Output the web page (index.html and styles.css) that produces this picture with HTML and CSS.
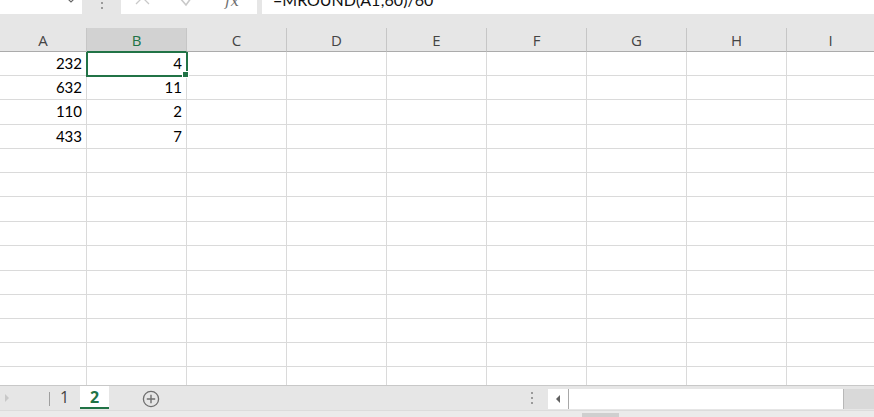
FILE: index.html
```html
<!DOCTYPE html>
<html>
<head>
<meta charset="utf-8">
<link rel="stylesheet" href="styles.css">
</head>
<body>
<div class="app">
  <div class="topbar">
    <div class="namebox">
      <svg class="chev" width="8" height="4" viewBox="0 0 8 4"><path d="M1 -1 L4 2 L7 -1" fill="none" stroke="#666" stroke-width="1.2"/></svg>
    </div>
    <div class="grip"><span class="dot"></span><span class="dot"></span></div>
    <div class="iconbox">
      <svg class="ico-x" width="16" height="14" viewBox="0 0 16 14"><path d="M1 -9 L14 4 M14 -9 L1 4" stroke="#c9c9c9" stroke-width="1.3" fill="none"/></svg>
      <svg class="ico-check" width="16" height="14" viewBox="0 0 16 14"><path d="M1 -2 L7 5 L15 -6" stroke="#c9c9c9" stroke-width="1.6" fill="none"/></svg>
      <span class="fx">fx</span>
    </div>
    <div class="formula"><span class="ftext">=MROUND(A1;60)/60</span></div>
  </div>

  <div class="sheet">
    <div class="hdr">A</div>
    <div class="hdr sel">B</div>
    <div class="hdr">C</div>
    <div class="hdr">D</div>
    <div class="hdr">E</div>
    <div class="hdr">F</div>
    <div class="hdr">G</div>
    <div class="hdr">H</div>
    <div class="hdr last">I</div>
  </div>
  <div class="cells" id="cells"></div>

  <div class="tabbar">
    <div class="nav"><svg width="6" height="10" viewBox="0 0 6 10"><path d="M1 1 L5 5 L1 9 Z" fill="#c8c8c8"/></svg></div>
    <div class="tabsep"></div>
    <div class="tab">1</div>
    <div class="tab active">2</div>
    <div class="add"><svg width="18" height="18" viewBox="0 0 18 18"><circle cx="9" cy="9" r="7.6" fill="none" stroke="#6f6f6f" stroke-width="1.3"/><path d="M9 4.8 V13.2 M4.8 9 H13.2" stroke="#6f6f6f" stroke-width="1.4"/></svg></div>
    <div class="spacer"></div>
    <div class="vdots"><span class="dot"></span><span class="dot"></span><span class="dot"></span></div>
    <div class="hscroll">
      <div class="sbtn"><svg width="6" height="10" viewBox="0 0 6 10"><path d="M5 1 L1 5 L5 9 Z" fill="#606060"/></svg></div>
      <div class="track"></div>
      <div class="send"></div>
    </div>
  </div>
  <div class="bottomstrip"><div class="thumb"></div></div>
</div>
<script src="app.js"></script>
</body>
</html>
```

FILE: app.js
```js
(function () {
  var data = [[232, 4], [632, 11], [110, 2], [433, 7]];
  var heights = [24, 24, 25, 24, 24, 24, 25, 24, 25, 24, 24, 24, 24, 24];
  var root = document.getElementById('cells');
  for (var r = 0; r < heights.length; r++) {
    var row = document.createElement('div');
    row.className = 'row';
    row.style.height = heights[r] + 'px';
    for (var c = 0; c < 9; c++) {
      var cell = document.createElement('div');
      cell.className = 'cell' + (c === 8 ? ' last' : '');
      if (data[r] && c < 2) cell.textContent = data[r][c];
      if (r === 0 && c === 1) {
        cell.className += ' active';
        var h = document.createElement('span');
        h.className = 'handle';
        cell.appendChild(h);
      }
      row.appendChild(cell);
    }
    root.appendChild(row);
  }
})();
```

FILE: styles.css
```css
html, body {
  margin: 0;
  padding: 0;
  background: #ffffff;
}
.app {
  width: 874px;
  height: 417px;
  overflow: hidden;
  display: flex;
  flex-direction: column;
  background: #e6e6e6;
  font-family: "Open Sans", "Noto Sans", sans-serif;
}

/* formula bar */
.topbar {
  height: 28px;
  flex: none;
  display: flex;
  align-items: flex-start;
  background: #e6e6e6;
}
.namebox {
  width: 82px;
  height: 14px;
  background: #fff;
  position: relative;
}
.chev {
  position: absolute;
  left: 67px;
  top: 0;
}
.grip {
  width: 39px;
  height: 14px;
  display: flex;
  flex-direction: column;
  align-items: center;
  gap: 3px;
  padding-top: 2px;
  box-sizing: border-box;
}
.grip .dot, .vdots .dot {
  width: 2px;
  height: 2px;
  background: #9a9a9a;
  display: block;
}
.iconbox {
  width: 136px;
  height: 14px;
  background: #fff;
  display: flex;
  align-items: flex-start;
  overflow: hidden;
}
.ico-x { margin-left: 14px; }
.ico-check { margin-left: 28px; }
.fx {
  margin-left: 30px;
  font-family: "DejaVu Serif", "Liberation Serif", serif;
  font-style: italic;
  font-size: 15px;
  line-height: 14px;
  color: #6e6e6e;
  margin-top: -6px;
}
.formula {
  margin-left: 5px;
  flex: 1;
  height: 14px;
  background: #fff;
  overflow: hidden;
}
.ftext {
  display: block;
  margin-top: -8px;
  padding-left: 11px;
  font-family: "Lato", "Open Sans", sans-serif;
  font-size: 16px;
  line-height: 16px;
  color: #111;
  white-space: nowrap;
}

/* column headers */
.sheet {
  flex: none;
  display: grid;
  grid-template-columns: 87px repeat(7, 100px) 87px;
  height: 24px;
  background: #e6e6e6;
}
.hdr {
  box-sizing: border-box;
  height: 24px;
  border-right: 1px solid #c6c6c6;
  border-bottom: 1px solid #ababab;
  text-align: center;
  font-size: 15px;
  line-height: 21px;
  padding-top: 2px;
  color: #444;
}
.hdr.last { border-right: none; }
.hdr.sel {
  background: #d2d2d2;
  color: #217346;
  border-bottom: 1px solid #217346;
}

/* cells */
.cells {
  flex: none;
  height: 333px;
  overflow: hidden;
  background: #fff;
}
.row {
  display: grid;
  grid-template-columns: 87px repeat(7, 100px) 87px;
}
.cell {
  box-sizing: border-box;
  border-right: 1px solid #dadada;
  border-bottom: 1px solid #dadada;
  text-align: right;
  padding-right: 4px;
  font-family: "Lato", "Open Sans", sans-serif;
  font-size: 15px;
  line-height: 23px;
  color: #000;
  position: relative;
}
.cell.last { border-right: none; }
.cell.active {
  outline: 2px solid #217346;
  outline-offset: -1px;
  z-index: 1;
}
.handle {
  position: absolute;
  right: -3px;
  bottom: -3px;
  width: 5px;
  height: 5px;
  background: #217346;
  border: 1px solid #fff;
  box-sizing: content-box;
}

/* sheet tabs */
.tabbar {
  flex: none;
  height: 25px;
  box-sizing: border-box;
  border-top: 1px solid #c8c8c8;
  display: flex;
  align-items: stretch;
  background: #e6e6e6;
}
.nav {
  width: 49px;
  display: flex;
  align-items: center;
  padding-left: 4px;
  box-sizing: border-box;
}
.tabsep {
  width: 1px;
  background: #9f9f9f;
  margin: 6px 0 4px;
}
.tab {
  width: 29px;
  text-align: center;
  font-size: 16px;
  line-height: 22px;
  color: #444;
}
.tab.active {
  background: #fff;
  color: #217346;
  font-weight: 700;
  border-bottom: 2px solid #217346;
  margin-bottom: 1px;
  margin-left: 1px;
}
.add {
  margin-left: 33px;
  display: flex;
  align-items: center;
  padding-top: 2px;
}
.spacer { flex: 1; }
.vdots {
  width: 16px;
  display: flex;
  flex-direction: column;
  align-items: center;
  justify-content: center;
  gap: 3px;
  margin-right: 8px;
}
.hscroll {
  width: 326px;
  display: flex;
  align-items: stretch;
  padding-top: 3px;
  padding-bottom: 1px;
  box-sizing: border-box;
}
.sbtn {
  width: 20px;
  background: #fff;
  display: flex;
  align-items: center;
  justify-content: center;
  border-right: 1px solid #a8a8a8;
}
.track {
  flex: 1;
  background: #fff;
  border-right: 1px solid #b8b8b8;
}
.send {
  width: 30px;
  background: #d9d9d9;
}
.bottomstrip {
  flex: 1;
  background: #ebebeb;
  border-top: 1px solid #dcdcdc;
  display: flex;
  align-items: flex-end;
}
.thumb {
  margin-left: 582px;
  width: 37px;
  height: 4px;
  background: #cfcfcf;
}
```
